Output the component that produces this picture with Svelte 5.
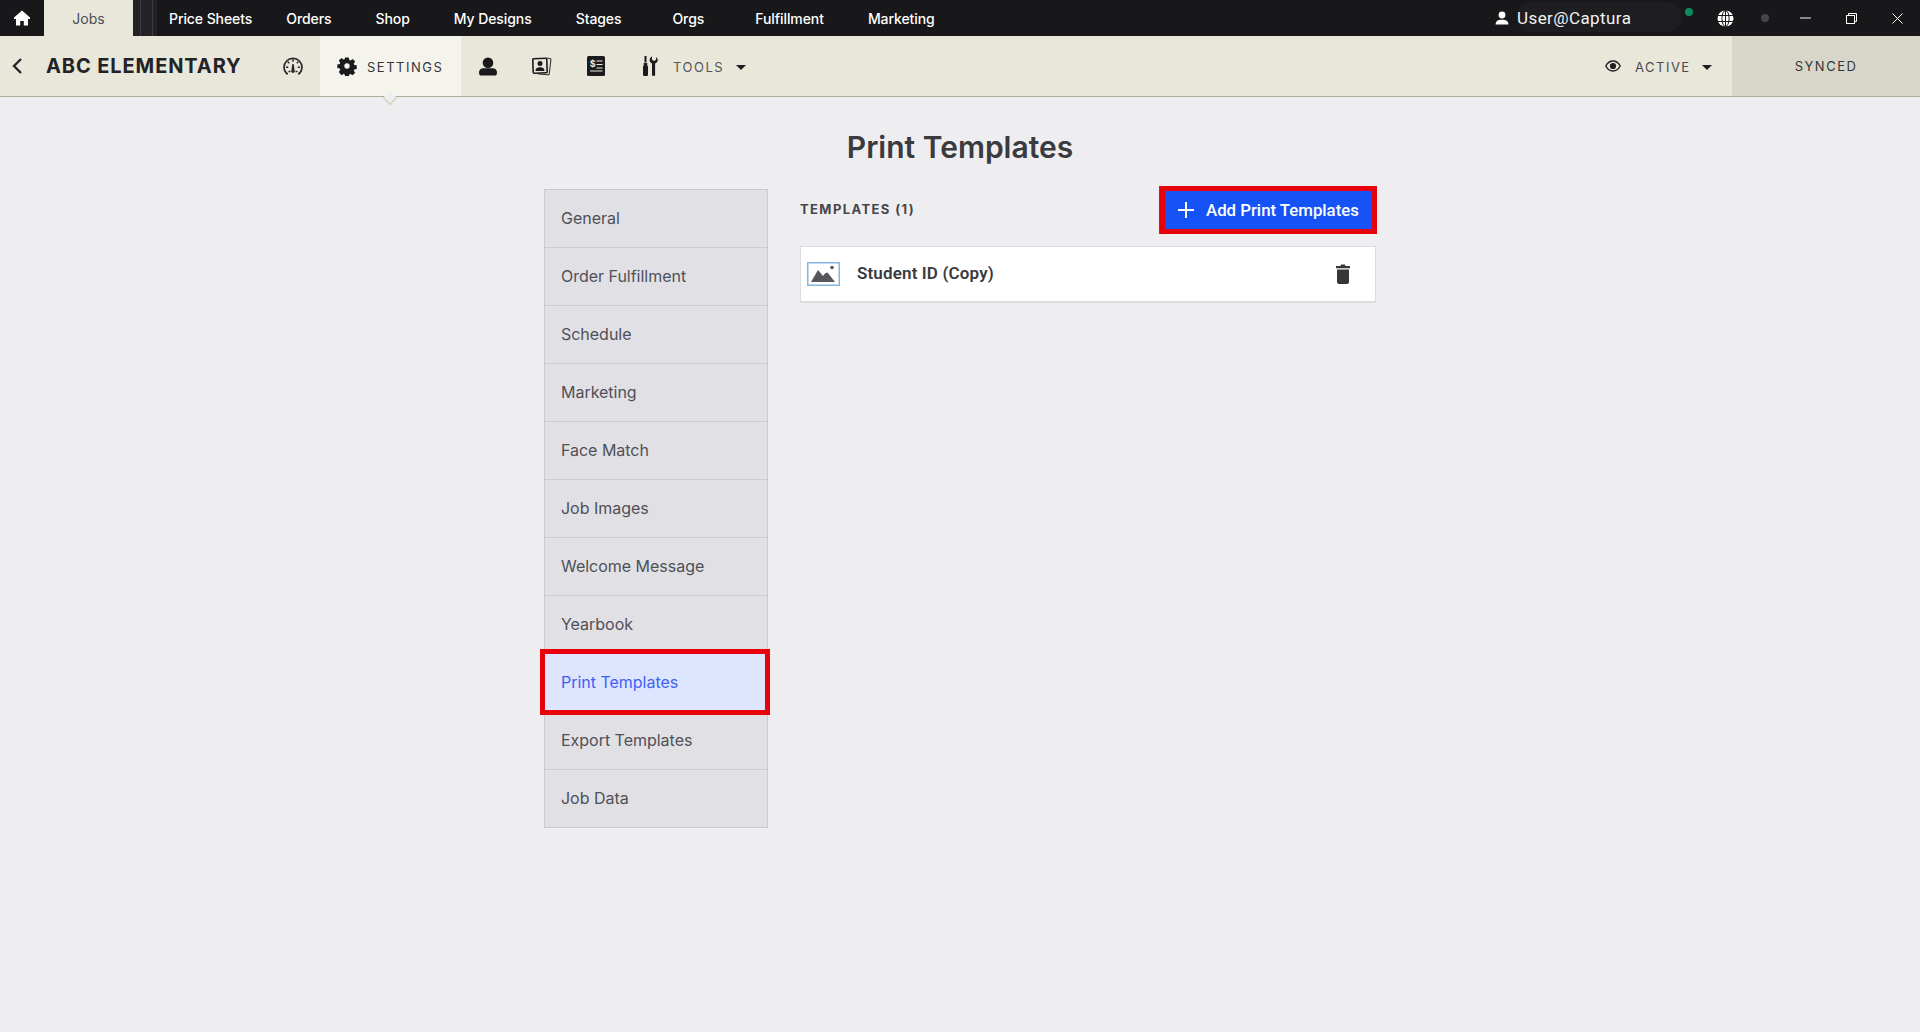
<script>
  const nav = [
    { label: 'Price Sheets', cls: 'first' },
    { label: 'Orders', cls: '' },
    { label: 'Shop', cls: '' },
    { label: 'My Designs', cls: '' },
    { label: 'Stages', cls: '' },
    { label: 'Orgs', cls: 'orgs' },
    { label: 'Fulfillment', cls: '' },
    { label: 'Marketing', cls: '' }
  ];
  const menu = ['General', 'Order Fulfillment', 'Schedule', 'Marketing', 'Face Match', 'Job Images', 'Welcome Message', 'Yearbook', 'Print Templates', 'Export Templates', 'Job Data'];
  const active = 'Print Templates';
</script>

<div class="page">
  <header class="topbar">
    <div class="home">
      <svg width="18" height="18" viewBox="0 0 18 18"><path d="M9 1.500 1 8.600V10h2v6.500h4.200v-4.400h3.600v4.400H15V10h2V8.600z" fill="#fff"/></svg>
    </div>
    <div class="jobs">Jobs</div>
    <div class="stripes"><i></i><i></i><i></i></div>
    <nav class="nav">
      {#each nav as item}
        <span class={item.cls}>{item.label}</span>
      {/each}
    </nav>
    <div class="sys">
      <svg class="u" width="14" height="14" viewBox="0 0 14 14"><circle cx="7" cy="4" r="3.400" fill="#fff"/><path d="M0.600 13.500c0-3.400 2.400-4.800 6.400-4.800s6.400 1.400 6.400 4.800z" fill="#fff"/></svg>
      <span class="user">User@Captura</span>
      <i class="green"></i>
      <svg class="globe" width="17" height="17" viewBox="0 0 17 17" fill="none"><circle cx="8.500" cy="8.500" r="8" fill="#fff"/><g stroke="#18181b" stroke-width="1"><ellipse cx="8.500" cy="8.500" rx="3.600" ry="8"/><path d="M8.500 .5v16M1 5.500h15M1 11.500h15"/></g></svg>
      <i class="grey"></i>
      <svg class="min" width="11" height="2" viewBox="0 0 11 2"><path d="M0 1h11" stroke="#b9b9bb" stroke-width="1.400"/></svg>
      <svg class="max" width="11" height="11" viewBox="0 0 11 11" fill="none" stroke="#fff" stroke-width="1"><rect x=".5" y="2.500" width="8" height="8"/><path d="M2.500 2.500V.5h8v8H8.500"/></svg>
      <svg class="close" width="11" height="11" viewBox="0 0 11 11"><path d="M.5.5l10 10M10.500.5l-10 10" stroke="#fff" stroke-width="1"/></svg>
    </div>
  </header>

  <div class="subbar">
    <svg class="back" width="12" height="18" viewBox="0 0 12 18" fill="none"><path d="M10 2 3 9l7 7" stroke="#232326" stroke-width="2.400"/></svg>
    <div class="job">ABC ELEMENTARY</div>
    <svg class="gauge" width="20" height="18" viewBox="0 0 20 18" fill="none"><path d="M5 16.700H3.600A9 9 0 1 1 16.400 16.700H15" stroke="#26262a" stroke-width="1.700"/><path d="M10 2.500v2.300M4.700 4.800l1.500 1.500M15.300 4.800l-1.500 1.500M3 10.200h2.200M17 10.200h-2.200M5.500 14.500h2M14.500 14.500h-2" stroke="#26262a" stroke-width="1.500"/><path d="M9.300 7h1.400l1 7.300a1.700 1.700 0 0 1-3.400 0z" fill="#26262a"/></svg>
    <div class="settings">
      <svg width="20" height="20" viewBox="0 0 20 20"><path fill-rule="evenodd" fill="#1b1b1e" d="M8 .5h4l.5 2.700 1.500.6 2.300-1.600 2.800 2.800-1.600 2.300.6 1.500 2.700.5v4l-2.700.5-.6 1.500 1.600 2.300-2.800 2.800-2.300-1.600-1.500.6-.5 2.700H8l-.5-2.700-1.500-.6-2.300 1.600L.9 16.600l1.600-2.300-.6-1.500L-.8 12.300V8.300l2.700-.5.6-1.500L.9 4 3.700 1.200 6 2.800l1.500-.6zM10 7a3 3 0 1 0 0 6 3 3 0 0 0 0-6z" transform="translate(1 1) scale(.9)"/></svg>
      <span class="caps">SETTINGS</span>
      <b class="tick"></b>
    </div>
    <svg class="person" width="18" height="19" viewBox="0 0 18 19"><circle cx="9" cy="5.800" r="5.300" fill="#19191c"/><path d="M0 16c0-3.500 2-4.800 5-4.800h8c3 0 5 1.300 5 4.800 0 1.700-1 2.600-2.500 2.600h-13C1 18.600 0 17.700 0 16z" fill="#19191c"/></svg>
    <svg class="photos" width="20" height="19" viewBox="0 0 20 19" fill="none"><path d="M15 1l4 .9-1.900 16-11.100-1" stroke="#2a2a2d" stroke-width="1"/><rect x="1" y="1.500" width="14" height="14.500" rx="1" stroke="#1b1b1e" stroke-width="1.600" transform="rotate(-2 8 9)"/><circle cx="8" cy="6.500" r="2.500" fill="#1b1b1e"/><path d="M3.500 14c0-3 2-3.800 4.500-3.800s4.500.8 4.500 3.800z" fill="#1b1b1e"/></svg>
    <svg class="invoice" width="18" height="20" viewBox="0 0 18 20"><rect width="18" height="20" rx="1.500" fill="#1b1b1e"/><text x="2.800" y="11" font-size="9" font-weight="700" fill="#e9e7da" font-family="Inter, sans-serif">$</text><path d="M9.500 5h6M9.500 8.500h6M9.500 12h6M3 15h12.500" stroke="#e9e7da" stroke-width="1.200"/></svg>
    <svg class="tools" width="16" height="20" viewBox="0 0 16 20"><path d="M2.500 0h2v6.500h-2zM1.700 7h3.600v2.500l.7 1V18.700a1.200 1.200 0 0 1-1.200 1.200H2.200A1.200 1.200 0 0 1 1 18.700V10.500l.7-1z" fill="#1b1b1e"/><path d="M10 .5v3.300l2 1.200 2.100-1.200V1.200c1.500.8 1.900 2.300 1.500 3.800-.4 1.300-1.400 2.100-2.500 2.400V19.800H10V7.400C8.400 6.700 7.600 5.400 7.700 3.800 7.800 2.300 8.700 1 10 .5z" fill="#1b1b1e"/></svg>
    <span class="caps tools-label">TOOLS</span>
    <b class="caret"></b>
    <div class="spacer"></div>
    <svg class="eye" width="16" height="12" viewBox="0 0 16 12" fill="none"><path d="M.8 6C2.500 2.800 5 1 8 1s5.500 1.800 7.200 5C13.500 9.200 11 11 8 11S2.500 9.200.8 6z" stroke="#1f1f22" stroke-width="1.400"/><circle cx="8" cy="6" r="3.100" fill="#1f1f22"/></svg>
    <span class="caps active-label">ACTIVE</span>
    <b class="caret active-caret"></b>
    <div class="synced"><span>SYNCED</span></div>
  </div>

  <main class="main">
    <h1>Print Templates</h1>
    <div class="columns">
      <ul class="menu">
        {#each menu as item}
          <li class:on={item === active}>{item}{#if item === active}<i class="mark"></i>{/if}</li>
        {/each}
      </ul>
      <section class="panel">
        <div class="head">
          <span class="count">TEMPLATES (1)</span>
          <button>
            <svg width="18" height="18" viewBox="0 0 18 18"><path d="M9 1v16M1 9h16" stroke="#fff" stroke-width="2"/></svg>
            Add Print Templates
            <i class="mark"></i>
          </button>
        </div>
        <div class="card">
          <svg class="thumb" width="33" height="24" viewBox="0 0 33 24" fill="none"><rect x=".75" y=".75" width="31.500" height="22.500" fill="#fff" stroke="#85b5e0" stroke-width="1.500"/><path d="M4 20 11 8l5 6 2-2.500 2.500-1L28 20z" fill="#57575b"/><circle cx="25" cy="5.500" r="1.800" fill="#57575b"/></svg>
          <span class="name">Student ID (Copy)</span>
          <svg class="trash" width="14" height="20" viewBox="0 0 14 20"><path d="M5 .5h4l.5 1.500H14v2.200H0V2h4.500zM1 5.500h12V18a2 2 0 0 1-2 2H3a2 2 0 0 1-2-2z" fill="#36363a"/></svg>
        </div>
      </section>
    </div>
  </main>
</div>

<style>
  :global(body) { margin: 0; background: #eeeef0; }
  .page { min-height: 1032px; background: #eeeef0; font-family: Inter, sans-serif; color: #3a3a3f; }

  .topbar { position: relative; z-index: 0; height: 36px; background: #18181b; display: flex; align-items: center; color: #fff; }
  .home { width: 44px; height: 36px; display: flex; align-items: center; justify-content: center; }
  .jobs { width: 89px; height: 36px; background: #e9e7da; color: #4c4d55; font-size: 14px; display: flex; align-items: center; justify-content: center; }
  .stripes { width: 25px; height: 36px; display: flex; justify-content: space-between; background: #232326; }
  .stripes i { width: 8px; border-right: 1px solid #3c3c40; box-sizing: border-box; }
  .stripes i:last-child { background: #18181b; width: 1px; border: 0; }
  .nav { display: flex; gap: 44px; margin-left: 11px; font-size: 14px; font-weight: 500; letter-spacing: -.08px; }
  .nav .first { margin-right: -10px; }
  .nav .orgs { margin: 0 7px; }
  .sys { margin-left: auto; display: flex; align-items: center; height: 36px; }
  .sys .u { margin-right: 8px; margin-left: 3px; }
  .user { position: relative; font-family: Roboto, sans-serif; font-size: 17px; letter-spacing: .42px; width: 115px; white-space: nowrap; color: #f1f1f1; margin-top: -1px; }
  .user::before { content: ''; position: absolute; left: 0; top: -6px; width: 165px; height: 30px; border-radius: 15px; background: #1e1e20; z-index: -1; }
  .green { width: 8px; height: 8px; border-radius: 50%; background: #0e8a5f; margin: -12px 0 0 53px; }
  .globe { margin-left: 24px; }
  .grey { width: 8px; height: 8px; border-radius: 50%; background: #44444a; margin-left: 27px; }
  .min { margin-left: 31px; }
  .max { margin-left: 35px; }
  .close { margin: 0 17px 0 35px; }

  .subbar { height: 60px; background: #e9e7da; border-bottom: 1px solid #b1ae9b; display: flex; align-items: center; color: #1f1f22; }
  .back { margin-left: 11px; }
  .job { margin-left: 23px; font-size: 20px; font-weight: 700; letter-spacing: .9px; width: 194px; white-space: nowrap; color: #232326; }
  .gauge { margin-left: 43px; }
  .settings { position: relative; width: 141px; height: 60px; margin-left: 17px; background: #f5f4ec; display: flex; align-items: center; padding-left: 17px; box-sizing: border-box; gap: 10px; }
  .tick { position: absolute; left: 65px; bottom: -7px; width: 9px; height: 9px; background: #eeeef0; border-right: 1px solid #c9c6b5; border-bottom: 1px solid #c9c6b5; transform: rotate(45deg); }
  .caps { font-size: 13px; letter-spacing: 1.5px; color: #36363a; white-space: nowrap; margin-top: 2px; }
  .person { margin-left: 18px; }
  .photos { margin-left: 35px; }
  .invoice { margin-left: 35px; }
  .tools { margin-left: 37px; }
  .tools-label { margin-left: 15px; color: #55555a; width: 50px; }
  .caret { width: 0; height: 0; border: 5.500px solid transparent; border-top: 5.500px solid #1f1f22; border-bottom: 0; margin-left: 13px; margin-top: 2px; }
  .spacer { flex: 1; }
  .eye { margin-right: 14px; }
  .active-label { width: 56px; color: #4a4a4e; }
  .active-caret { margin-left: 11px; }
  .synced { width: 188px; height: 60px; margin-left: 20px; background: #d8d6c9; display: flex; align-items: center; justify-content: center; }
  .synced span { font-size: 13px; letter-spacing: 1.500px; color: #36363a; }

  .main { display: flex; flex-direction: column; align-items: center; }
  h1 { margin: 28px 0 0; height: 36px; line-height: 44px; font-size: 30px; font-weight: 600; color: #3a3a3f; }
  .columns { margin-top: 28px; width: 832px; display: flex; gap: 32px; align-items: flex-start; }
  .menu { list-style: none; margin: 0; padding: 0; width: 224px; box-sizing: border-box; background: #e1e0e5; border: 1px solid #cbcad1; flex: none; }
  .menu li { position: relative; height: 58px; line-height: 56px; padding-left: 16px; font-size: 16px; letter-spacing: -.02px; color: #4f5058; border-bottom: 1px solid #cbcad1; box-sizing: border-box; }
  .menu li:last-child { border-bottom: 0; height: 57px; }
  .menu li.on { background: #dde5ff; color: #3f62f4; }
  .mark { position: absolute; border: 5px solid #e8000b; pointer-events: none; }
  .menu .mark { inset: -5px -3px -4px -5px; }

  .panel { flex: 1; }
  .head { display: flex; justify-content: space-between; align-items: center; height: 48px; margin-top: -3px; }
  .count { font-family: Inter, sans-serif; font-size: 13px; font-weight: 700; letter-spacing: 1.4px; color: #45454a; margin-top: -3px; }
  button { position: relative; width: 217px; height: 48px; margin-right: 0; border: 0; background: #1653f6; color: #fff; font-family: Roboto, sans-serif; font-size: 16.8px; font-weight: 500; display: flex; align-items: center; gap: 11px; padding: 0 0 0 18px; box-sizing: border-box; }
  button .mark { inset: 0 -1px 0 1px; }
  .card { margin-top: 12px; height: 54px; background: #fff; border: 1px solid #dcdce0; border-bottom: 2px solid #dcdce0; display: flex; align-items: center; box-sizing: content-box; }
  .thumb { margin-left: 6px; }
  .name { margin-left: 17px; font-family: Roboto, sans-serif; font-size: 17px; font-weight: 600; letter-spacing: .14px; color: #3a3a3f; margin-top: -2px; }
  .trash { margin-left: auto; margin-right: 25px; }
</style>
